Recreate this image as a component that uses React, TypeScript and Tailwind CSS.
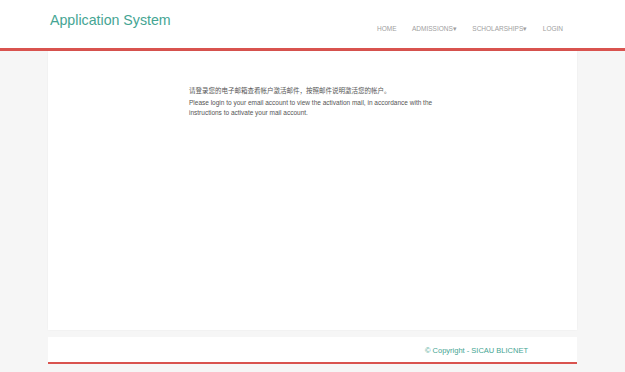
export default function App() {
  return (
    <div className="w-[625px] h-[372px] bg-[#f6f6f6] overflow-hidden" style={{ fontFamily: '"Liberation Sans", Arial, "Noto Sans CJK SC", sans-serif' }}>
      <header className="h-[51px] bg-white border-b-[3px] border-[#d9534f] flex items-start">
        <div className="ml-[50px] mt-[11px] text-[14.2px] leading-[18px] text-[#45a593]">Application System</div>
        <nav className="ml-auto mr-[62px] mt-[24px] flex gap-[15.5px] text-[6.5px] leading-[10px] text-[#a0a0a0]">
          <span>HOME</span>
          <span>ADMISSIONS▾</span>
          <span>SCHOLARSHIPS▾</span>
          <span>LOGIN</span>
        </nav>
      </header>
      <main className="mx-[48px] h-[279px] bg-white shadow-[0_0_2px_rgba(0,0,0,0.05)] pt-[35px] pl-[141px] text-[6.5px] leading-[10px] text-[#555]">
        <p>请登录您的电子邮箱查看帐户激活邮件，按照邮件说明激活您的帐户。</p>
        <p className="mt-[2px] w-[260px]">Please login to your email account to view the activation mail, in accordance with the instructions to activate your mail account.</p>
      </main>
      <footer className="mx-[48px] mt-[7px] h-[27px] bg-white border-b-[2px] border-[#d9534f] flex items-center justify-end pr-[49px] pt-[3px] text-[7.5px] text-[#45a593]">
        © Copyright - SICAU BLICNET
      </footer>
    </div>
  );
}
